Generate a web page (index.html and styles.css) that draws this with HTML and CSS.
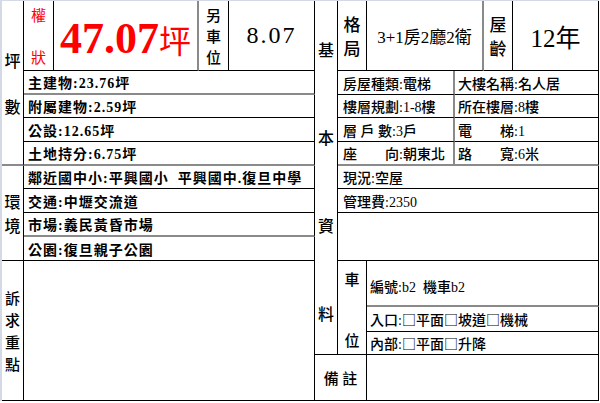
FILE: index.html
```html
<!DOCTYPE html>
<html lang="zh-Hant">
<head>
<meta charset="utf-8">
<title>物件資料</title>
<link rel="stylesheet" href="styles.css">
</head>
<body>
<div class="sheet">
  <div class="grid">
    <div class="cell vlabel c-ping">坪<br>數</div>
    <div class="cell red c-quan">權<br>狀</div>
    <div class="cell c-big gr"><span class="bignum">47.07</span><span class="bigunit">坪</span></div>
    <div class="cell vlabel c-ling">另<br>車<br>位</div>
    <div class="cell c-807">8.07</div>
    <div class="cell vlabel c-ji">基<br>本<br>資<br>料</div>
    <div class="cell vlabel c-ge">格<br>局</div>
    <div class="cell c-layout gr">3+1房2廳2衛</div>
    <div class="cell vlabel c-wu">屋<br>齡</div>
    <div class="cell c-age">12年</div>

    <div class="cell ltxt r2 gb">主建物:23.76坪</div>
    <div class="cell ltxt r3">附屬建物:2.59坪</div>
    <div class="cell ltxt r4">公設:12.65坪</div>
    <div class="cell ltxt r5 gb">土地持分:6.75坪</div>

    <div class="cell rtxt ra r2 gr">房屋種類:電梯</div>
    <div class="cell rtxt rb r2">大樓名稱:名人居</div>
    <div class="cell rtxt ra r3 gr">樓層規劃:1-8樓</div>
    <div class="cell rtxt rb r3">所在樓層:8樓</div>
    <div class="cell rtxt ra r4 gr">層 戶 數:3戶</div>
    <div class="cell rtxt rb r4">電　　梯:1</div>
    <div class="cell rtxt ra r5 gr gb">座　　向:朝東北</div>
    <div class="cell rtxt rb r5 gb">路　　寬:6米</div>

    <div class="cell vlabel c-env">環<br>境</div>
    <div class="cell ltxt r6">鄰近國中小:平興國小&nbsp;&nbsp;平興國中.復旦中學</div>
    <div class="cell ltxt r7">交通:中壢交流道</div>
    <div class="cell ltxt r8 gb">市場:義民黃昏市場</div>
    <div class="cell ltxt r9">公園:復旦親子公園</div>

    <div class="cell rtxt rfull r6">現況:空屋</div>
    <div class="cell rtxt rfull r7">管理費:2350</div>
    <div class="cell rfull r89"></div>

    <div class="cell vlabel c-point">訴<br>求<br>重<br>點</div>
    <div class="cell c-pointbody"></div>

    <div class="cell c-park"><span>車</span><span>位</span></div>
    <div class="cell ptxt p1 gb">編號:b2&nbsp;&nbsp;機車b2</div>
    <div class="cell ptxt p2">入口:<span class="box">□</span>平面<span class="box">□</span>坡道<span class="box">□</span>機械</div>
    <div class="cell ptxt p3">內部:<span class="box">□</span>平面<span class="box">□</span>升降</div>

    <div class="cell c-note">備&nbsp;註</div>
    <div class="cell c-notebody"></div>
  </div>
</div>
</body>
</html>
```

FILE: styles.css
```css
* { box-sizing: border-box; }
html, body { margin: 0; padding: 0; background: #fff; }
body {
  font-family: "Liberation Serif", "Noto Sans CJK TC", serif;
  color: #000;
  width: 600px;
  height: 403px;
  overflow: hidden;
}
.sheet {
  border-top: 1px solid #d3dae6;
  border-left: 2px solid #d3dae6;
  width: 599px;
}
.grid {
  display: grid;
  grid-template-columns: 22px 30px 145px 30px 86px 23px 29px 88px 29px 29px 86px;
  grid-template-rows: 70px 24px 23px 24px 24px 23px 24px 24px 24px 46px 25px 23px 46px;
}
.cell {
  border-right: 1px solid #000;
  border-bottom: 1px solid #000;
  display: flex;
  align-items: center;
  overflow: hidden;
  white-space: nowrap;
}
.gr { border-right: 2px solid #8a8a8a; }
.gb { border-bottom: 2px solid #8a8a8a; }

.vlabel {
  justify-content: center;
  text-align: center;
  font-family: "Noto Sans CJK TC", serif;
  font-size: 16px;
  font-weight: 500;
}
.c-ping { grid-column: 1; grid-row: 1 / 6; line-height: 46px; border-bottom: 2px solid #8a8a8a; }
.c-quan {
  grid-column: 2; grid-row: 1;
  justify-content: center; text-align: center;
  font-family: "Noto Sans CJK TC", serif;
  font-size: 15px; line-height: 42px;
}
.red { color: #ff0000; }
.c-big { grid-column: 3; grid-row: 1; justify-content: center; color: #ff0000; padding-top: 6px; }
.bignum { font-family: "Liberation Serif", serif; font-weight: 700; font-size: 44px; line-height: 1; }
.bigunit { font-family: "Noto Sans CJK TC", serif; font-size: 32px; line-height: 1; }
.c-ling { grid-column: 4; grid-row: 1; line-height: 21px; font-size: 15px; }
.c-807 { grid-column: 5; grid-row: 1; justify-content: center; font-size: 24px; letter-spacing: 2px; }
.c-ji { grid-column: 6; grid-row: 1 / 13; line-height: 88px; padding-top: 6px; }
.c-ge { grid-column: 7; grid-row: 1; line-height: 24px; font-size: 17px; }
.c-layout { grid-column: 8 / 10; grid-row: 1; justify-content: center; font-size: 17px; }
.c-wu { grid-column: 10; grid-row: 1; line-height: 24px; font-size: 17px; }
.c-age { grid-column: 11; grid-row: 1; justify-content: center; font-size: 25px; }

.ltxt {
  grid-column: 2 / 6;
  padding-left: 4px;
  font-size: 14px;
  letter-spacing: 1px;
  font-weight: 700;
}
.r2 { grid-row: 2; }
.r3 { grid-row: 3; }
.r4 { grid-row: 4; }
.r5 { grid-row: 5; }
.r6 { grid-row: 6; }
.r7 { grid-row: 7; }
.r8 { grid-row: 8; }
.r9 { grid-row: 9; }
.r89 { grid-row: 8 / 10; }

.rtxt { font-size: 14px; font-weight: 500; }
.ra { grid-column: 7 / 9; padding-left: 5px; }
.rb { grid-column: 9 / 12; padding-left: 3px; }
.rfull { grid-column: 7 / 12; padding-left: 5px; }

.c-env { grid-column: 1; grid-row: 6 / 10; line-height: 24px; }
.c-point { grid-column: 1; grid-row: 10 / 14; line-height: 22px; font-size: 15px; }
.c-pointbody { grid-column: 2 / 6; grid-row: 10 / 14; }

.c-park {
  grid-column: 7; grid-row: 10 / 13;
  flex-direction: column;
  justify-content: space-between;
  padding: 7px 0 4px;
  font-family: "Noto Sans CJK TC", serif;
  font-size: 15px;
  font-weight: 500;
}
.ptxt { grid-column: 8 / 12; padding-left: 3px; font-size: 14px; font-weight: 500; }
.box { font-family: "Noto Sans CJK TC", sans-serif; font-size: 14px; }
.p1 { grid-row: 10; padding-top: 6px; }
.p2 { grid-row: 11; }
.p3 { grid-row: 12; }

.c-note {
  grid-column: 6 / 8; grid-row: 13;
  justify-content: center;
  font-family: "Noto Sans CJK TC", serif;
  font-size: 15px;
  font-weight: 500;
}
.c-notebody { grid-column: 8 / 12; grid-row: 13; }
```
